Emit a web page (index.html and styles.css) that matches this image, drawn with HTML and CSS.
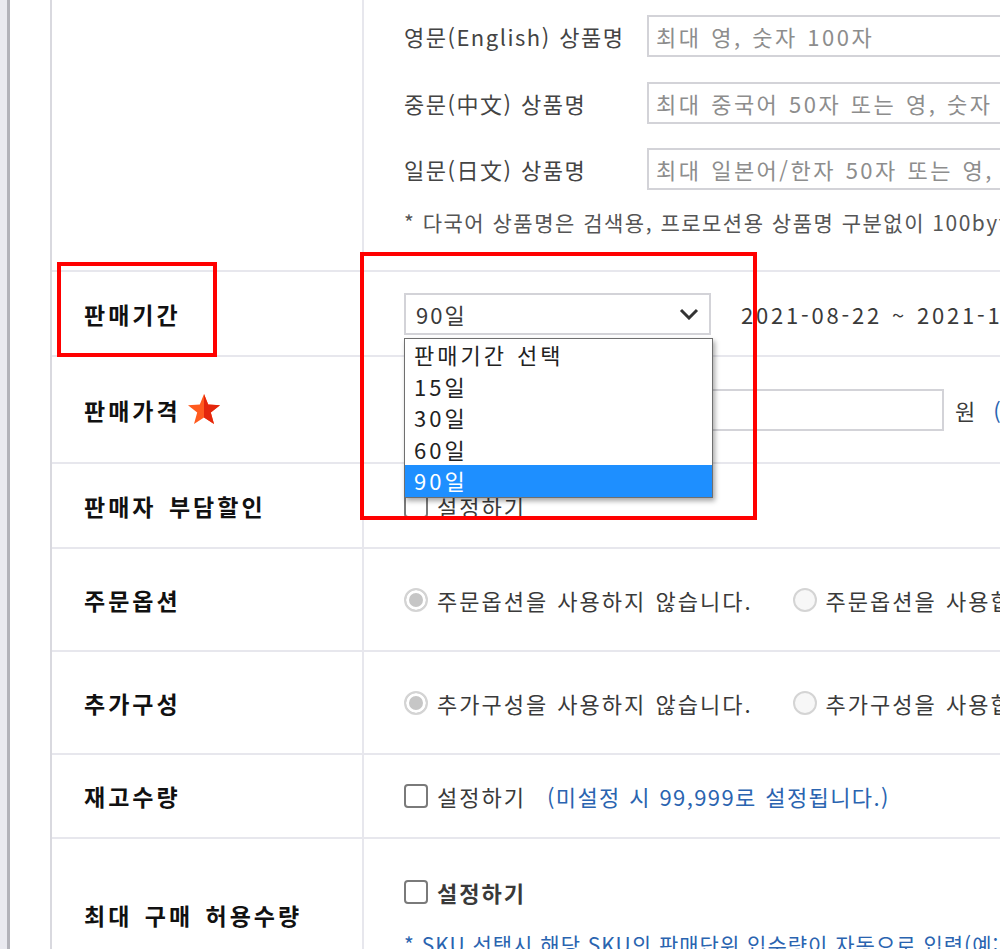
FILE: index.html
```html
<!DOCTYPE html>
<html lang="ko">
<head>
  <meta charset="UTF-8" />
  <meta name="viewport" content="width=device-width, initial-scale=1.0" />
  <title>상품 등록 - 판매정보</title>
  <link rel="stylesheet" href="styles.css">
</head>
<body>
  <div class="page">
    <div class="side-rail"></div>
    <div class="main">
      <div class="form-table">

        <div class="row row-names">
          <div class="th"></div>
          <div class="td td-names">
            <div class="lang-row">
              <span class="lang-label">영문(English) 상품명</span>
              <input class="text-input" type="text" placeholder="최대 영, 숫자 100자">
            </div>
            <div class="lang-row">
              <span class="lang-label">중문(中文) 상품명</span>
              <input class="text-input" type="text" placeholder="최대 중국어 50자 또는 영, 숫자 100자">
            </div>
            <div class="lang-row">
              <span class="lang-label">일문(日文) 상품명</span>
              <input class="text-input" type="text" placeholder="최대 일본어/한자 50자 또는 영, 숫자 100자">
            </div>
            <p class="note">* 다국어 상품명은 검색용, 프로모션용 상품명 구분없이 100byte 까지 입력 가능합니다.</p>
          </div>
        </div>

        <div class="row row-period">
          <div class="th">
            판매기간
            <span class="mark mark-label"></span>
          </div>
          <div class="td">
            <div class="select">
              <span>90일</span>
              <svg class="chevron" width="20" height="12" viewBox="0 0 20 12">
                <polyline points="2,2 10,10 18,2" fill="none" stroke="#333" stroke-width="3" />
              </svg>
            </div>
            <span class="date-range">2021-08-22 ~ 2021-11-19</span>
            <ul class="select-list">
              <li>판매기간 선택</li>
              <li>15일</li>
              <li>30일</li>
              <li>60일</li>
              <li class="active">90일</li>
            </ul>
            <span class="mark mark-field"></span>
          </div>
        </div>

        <div class="row row-price">
          <div class="th">
            판매가격
            <svg class="star" width="34" height="32" viewBox="0 0 34 32">
              <polygon points="17,1 21.2,11.6 33,12.2 23.8,19.6 27,31 17,24.6 7,31 10.2,19.6 1,12.2 12.8,11.6" fill="#ff5a1e" />
              <polygon points="17,1 21.2,11.6 33,12.2 23.8,19.6 27,31 17,24.6" fill="#e4260c" />
            </svg>
          </div>
          <div class="td">
            <input class="price-input" type="text">
            <span class="unit">원</span>
            <span class="hint hint-price">(판매가는 10원 단위로 입력)</span>
          </div>
        </div>

        <div class="row row-discount">
          <div class="th">판매자 부담할인</div>
          <div class="td">
            <label class="choice"><input class="checkbox" type="checkbox">설정하기</label>
          </div>
        </div>

        <div class="row row-option">
          <div class="th">주문옵션</div>
          <div class="td">
            <label class="choice"><span class="radio checked"></span>주문옵션을 사용하지 않습니다.</label>
            <label class="choice"><span class="radio"></span>주문옵션을 사용합니다.</label>
          </div>
        </div>

        <div class="row row-addon">
          <div class="th">추가구성</div>
          <div class="td">
            <label class="choice"><span class="radio checked"></span>추가구성을 사용하지 않습니다.</label>
            <label class="choice"><span class="radio"></span>추가구성을 사용합니다.</label>
          </div>
        </div>

        <div class="row row-stock">
          <div class="th">재고수량</div>
          <div class="td">
            <label class="choice"><input class="checkbox" type="checkbox">설정하기</label>
            <span class="hint hint-stock">(미설정 시 99,999로 설정됩니다.)</span>
          </div>
        </div>

        <div class="row row-max">
          <div class="th">최대 구매 허용수량</div>
          <div class="td td-stack">
            <label class="choice choice-bold"><input class="checkbox" type="checkbox">설정하기</label>
            <p class="hint hint-sku">* SKU 선택시 해당 SKU의 판매단위 입수량이 자동으로 입력(예: 1박스 10개)</p>
          </div>
        </div>

      </div>
    </div>
  </div>
</body>
</html>
```

FILE: styles.css
```css
* {
  margin: 0;
  padding: 0;
  box-sizing: border-box;
}
body {
  font-family: "Noto Sans CJK KR", "Noto Sans", sans-serif;
  font-size: 22px;
  letter-spacing: 2px;
  word-spacing: 1px;
  color: #3a3a3a;
  background: #fff;
  overflow: hidden;
}
.page {
  display: flex;
  min-height: 100vh;
}
.side-rail {
  width: 10px;
  flex-shrink: 0;
  background: #e9e9ef;
  border-right: 3px solid #b2b2b9;
}
.main {
  flex-shrink: 0;
  padding-left: 40px;
}
.form-table {
  width: 1300px;
  border-left: 2px solid #d9d9df;
}
.row {
  display: grid;
  grid-template-columns: 312px 1fr;
  border-bottom: 2px solid #e7e7ed;
}
.row-names { height: 272px; }
.row-period { height: 85px; }
.row-price { height: 107px; }
.row-discount { height: 85px; }
.row-option { height: 103px; }
.row-addon { height: 103px; }
.row-stock { height: 84px; }
.row-max { height: 154px; }

.th {
  position: relative;
  display: flex;
  align-items: center;
  padding-left: 32px;
  border-right: 2px solid #e7e7ed;
  font-size: 23px;
  font-weight: 700;
  letter-spacing: 3px;
  word-spacing: 3px;
  color: #111;
}
.td {
  position: relative;
  display: flex;
  align-items: center;
  padding-left: 40px;
}

/* multi-language names */
.td-names {
  display: block;
  padding-top: 15px;
}
.lang-row {
  display: flex;
  align-items: center;
  height: 42px;
}
.lang-row + .lang-row {
  margin-top: 24.5px;
}
.lang-label {
  width: 243px;
  flex-shrink: 0;
  color: #444;
  letter-spacing: 1.5px;
  white-space: nowrap;
}
.text-input,
.price-input {
  height: 42px;
  border: 2px solid #d3d3d8;
  background: #fff;
  font-family: inherit;
  font-size: 22px;
  letter-spacing: 2.5px;
  word-spacing: 1px;
  color: #333;
  padding-left: 7px;
  outline: none;
}
.text-input {
  width: 500px;
}
.text-input::placeholder {
  color: #8d8d8d;
}
.note {
  margin-top: 17px;
  line-height: 30px;
  font-size: 21px;
  letter-spacing: 1.5px;
  word-spacing: 0;
  color: #555;
  white-space: nowrap;
}

/* sales period */
.select {
  width: 307px;
  height: 42px;
  display: flex;
  align-items: center;
  justify-content: space-between;
  padding: 0 10px 0 10px;
  border: 2px solid #d3d3d8;
  background: #fff;
}
.date-range {
  margin-left: 30px;
  letter-spacing: 2.8px;
  white-space: nowrap;
}
.select-list {
  position: absolute;
  left: 40px;
  top: 66px;
  width: 309px;
  list-style: none;
  background: #fff;
  border: 1px solid #6f6f6f;
  box-shadow: 2px 3px 5px rgba(0, 0, 0, 0.35);
  z-index: 2;
}
.select-list li {
  height: 31.6px;
  line-height: 31.6px;
  padding-left: 9px;
  letter-spacing: 3px;
  color: #222;
}
.select-list li.active {
  background: #1e8fff;
  color: #fff;
}

/* annotation boxes */
.mark {
  position: absolute;
  border: 4px solid #f00;
  pointer-events: none;
  z-index: 3;
}
.mark-label {
  left: 5px;
  top: -10px;
  width: 160px;
  height: 95px;
}
.mark-field {
  left: -4px;
  top: -20px;
  width: 397px;
  height: 268px;
}

/* price */
.star {
  margin-left: 6px;
  margin-top: -2px;
}
.price-input {
  width: 540px;
  flex-shrink: 0;
}
.unit {
  margin-left: 11px;
}
.hint {
  color: #2a64b0;
  white-space: nowrap;
}
.hint-price {
  margin-left: 16px;
}
.hint-stock {
  margin-left: 21px;
  letter-spacing: 1.4px;
}

/* checkbox / radio */
.choice {
  display: inline-flex;
  align-items: center;
  gap: 9px;
  white-space: nowrap;
}
.choice + .choice {
  margin-left: 40px;
}
.checkbox {
  appearance: none;
  width: 24px;
  height: 24px;
  border: 2px solid #7a7a7a;
  border-radius: 4px;
  background: #fff;
  flex-shrink: 0;
}
.radio {
  display: inline-block;
  width: 24px;
  height: 24px;
  border-radius: 50%;
  border: 2px solid #d4d4d4;
  background: #f7f7f7;
  flex-shrink: 0;
}
.radio.checked {
  background: #c6c6c6;
  box-shadow: inset 0 0 0 3px #fff;
}

/* max purchase */
.td-stack {
  flex-direction: column;
  align-items: flex-start;
  justify-content: center;
  padding-top: 6px;
}
.choice-bold {
  font-weight: 700;
  height: 30px;
}
.hint-sku {
  margin-top: 22px;
  line-height: 30px;
  font-size: 21px;
  letter-spacing: 1px;
  word-spacing: 0;
}
```
